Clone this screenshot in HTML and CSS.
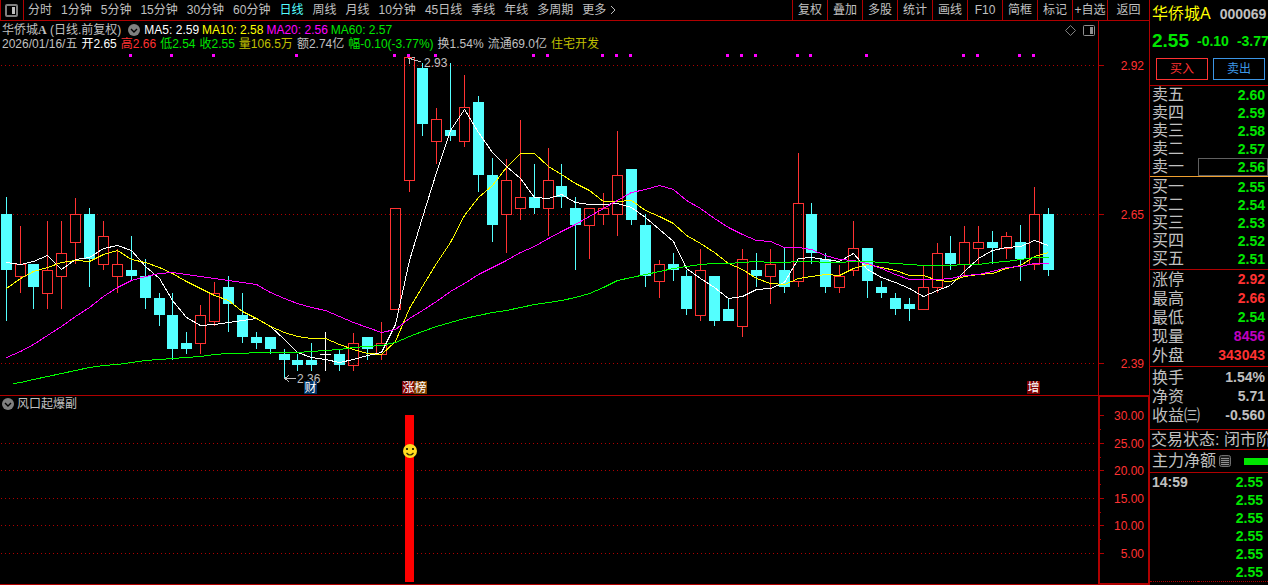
FILE: index.html
```html
<!DOCTYPE html>
<html lang="zh-CN">
<head>
<meta charset="utf-8">
<title>华侨城A 日线</title>
<link rel="stylesheet" href="styles.css">
</head>
<body>
<div class="app">
  <main class="main">
    <nav class="toolbar">
      <button class="layout-btn" type="button" aria-label="布局">
        <svg width="13" height="13" viewBox="0 0 13 13"><rect x="1" y="1" width="11" height="11" rx="1" fill="none" stroke="#808080" stroke-width="2"/><rect x="7" y="3" width="3" height="7" fill="#c0c0c0"/></svg>
      </button>
      <div class="periods">
        <button type="button">分时</button>
        <button type="button">1分钟</button>
        <button type="button">5分钟</button>
        <button type="button">15分钟</button>
        <button type="button">30分钟</button>
        <button type="button">60分钟</button>
        <button type="button" class="active">日线</button>
        <button type="button">周线</button>
        <button type="button">月线</button>
        <button type="button">10分钟</button>
        <button type="button">45日线</button>
        <button type="button">季线</button>
        <button type="button">年线</button>
        <button type="button">多周期</button>
        <button type="button" class="more">更多<svg width="6" height="10" viewBox="0 0 6 10"><path d="M1 1l4 4-4 4" fill="none" stroke="#c0c0c0"/></svg></button>
      </div>
      <div class="tools">
        <button type="button">复权</button>
        <button type="button">叠加</button>
        <button type="button">多股</button>
        <button type="button">统计</button>
        <button type="button">画线</button>
        <button type="button">F10</button>
        <button type="button">简框</button>
        <button type="button">标记</button>
        <button type="button">+自选</button>
        <button type="button" class="back">返回</button>
      </div>
    </nav>

    <section class="panel">
      <svg class="plot" id="kline" viewBox="0 21 1149 374" preserveAspectRatio="none"></svg>
      <div class="info">
        <div class="info-row">
          <span class="title">华侨城<b class="serif">A</b> (日线.前复权)</span>
          <svg class="drop" width="12" height="12" viewBox="0 0 12 12"><circle cx="6" cy="6" r="6" fill="#808080"/><path d="M3 5l3 3 3-3" fill="none" stroke="#000" stroke-width="1.4"/></svg>
          <span class="ma white">MA5: 2.59</span>
          <span class="ma yellow">MA10: 2.58</span>
          <span class="ma magenta">MA20: 2.56</span>
          <span class="ma lime">MA60: 2.57</span>
          <span class="corner">
            <svg width="11" height="11" viewBox="0 0 11 11"><path d="M5.500.5l5 5-5 5-5-5z" fill="none" stroke="#808080"/></svg>
            <svg width="12" height="11" viewBox="0 0 12 11"><rect x=".5" y=".5" width="11" height="10" rx="1" fill="none" stroke="#909090"/><rect x="7" y="2" width="3" height="7" fill="#909090"/></svg>
          </span>
        </div>
        <div class="info-row quote">
          <span>2026/01/16/五</span>
          <span class="white">开2.65</span>
          <span class="red">高2.66</span>
          <span class="green">低2.54</span>
          <span class="green">收2.55</span>
          <span class="olive">量106.5万</span>
          <span>额2.74亿</span>
          <span class="green">幅-0.10(-3.77%)</span>
          <span>换1.54%</span>
          <span>流通69.0亿</span>
          <span class="olive">住宅开发</span>
        </div>
      </div>
    </section>

    <section class="panel">
      <svg class="plot" id="indicator" viewBox="0 396 1149 188" preserveAspectRatio="none"></svg>
      <div class="info sub">
        <div class="info-row">
          <svg width="12" height="12" viewBox="0 0 12 12"><circle cx="6" cy="6" r="6" fill="#808080"/><path d="M3 5l3 3 3-3" fill="none" stroke="#000" stroke-width="1.4"/></svg>
          <span class="sub-title">风口起爆副</span>
        </div>
      </div>
    </section>
  </main>

  <aside class="side">
    <header class="stock">
      <div class="stock-name"><span class="yellow">华侨城A</span><b>000069</b></div>
      <div class="stock-price green"><b class="last">2.55</b><b>-0.10</b><b>-3.77%</b></div>
      <div class="trade">
        <button type="button" class="buy">买入</button>
        <button type="button" class="sell">卖出</button>
      </div>
    </header>
    <table class="book asks">
      <tr><th>卖五</th><td>2.60</td></tr>
      <tr><th>卖四</th><td>2.59</td></tr>
      <tr><th>卖三</th><td>2.58</td></tr>
      <tr><th>卖二</th><td>2.57</td></tr>
      <tr><th>卖一</th><td class="picked">2.56</td></tr>
    </table>
    <div class="bids">
      <table class="book">
        <tr><th>买一</th><td>2.55</td></tr>
        <tr><th>买二</th><td>2.54</td></tr>
        <tr><th>买三</th><td>2.53</td></tr>
        <tr><th>买四</th><td>2.52</td></tr>
        <tr><th>买五</th><td>2.51</td></tr>
      </table>
    </div>
    <div class="stats">
      <table class="book tall">
        <tr><th>涨停</th><td class="red">2.92</td></tr>
        <tr><th>最高</th><td class="red">2.66</td></tr>
        <tr><th>最低</th><td>2.54</td></tr>
        <tr><th>现量</th><td class="purple">8456</td></tr>
        <tr><th>外盘</th><td class="red">343043</td></tr>
      </table>
    </div>
    <div class="ratios">
      <table class="book tall">
        <tr><th>换手</th><td class="grey">1.54%</td></tr>
        <tr><th>净资</th><td class="grey">5.71</td></tr>
        <tr><th>收益㈢</th><td class="grey">-0.560</td></tr>
      </table>
    </div>
    <div class="status">交易状态: 闭市阶段</div>
    <div class="flow">
      <span>主力净额</span>
      <svg width="12" height="12" viewBox="0 0 12 12"><rect x=".5" y=".5" width="11" height="11" rx="2" fill="#202020" stroke="#707070"/><path d="M2 3.500h8M2 5.500h8M2 7.500h8M2 9.500h8" stroke="#909090"/></svg>
      <i class="flow-bar"></i>
    </div>
    <table class="book ticks">
      <tr><th>14:59</th><td>2.55</td></tr>
      <tr><th></th><td>2.55</td></tr>
      <tr><th></th><td>2.55</td></tr>
      <tr><th></th><td>2.55</td></tr>
      <tr><th></th><td>2.55</td></tr>
      <tr><th></th><td>2.55</td></tr>
    </table>
  </aside>
</div>
<script src="chart.js"></script>
</body>
</html>
```

FILE: styles.css
```css
* { box-sizing: border-box; }

body {
  margin: 0;
  background: #000;
  color: #c0c0c0;
  font: 12px/14px "Liberation Sans", "Noto Sans CJK SC", sans-serif;
}

button {
  margin: 0;
  padding: 0;
  border: 0;
  background: none;
  color: inherit;
  font: inherit;
  white-space: nowrap;
}

svg { display: block; flex: none; }

.app {
  display: grid;
  grid-template-columns: minmax(0, 1fr) 119px;
  height: 100vh;
  overflow: hidden;
}

.main {
  display: grid;
  grid-template-rows: 21px minmax(0, 375fr) minmax(0, 189fr);
  min-width: 0;
}

/* toolbar */
.toolbar {
  display: flex;
  border-bottom: 1px solid #b00000;
}
.layout-btn {
  width: 24px;
  padding-left: 4px;
  border-left: 1px solid #b00000;
  border-right: 1px solid #b00000;
}
.periods {
  display: flex;
  flex: 1;
  gap: 9px;
  padding-left: 4px;
  overflow: hidden;
}
.periods .active { color: #54ffff; }
.more { display: flex; align-items: center; gap: 4px; }
.tools { display: flex; }
.tools button { width: 35px; border-left: 1px solid #b00000; }
.tools .back { width: 42px; }

/* chart panels */
.panel {
  display: grid;
  min-height: 0;
  border-bottom: 1px solid #b00000;
}
.plot {
  grid-area: 1 / 1;
  width: 100%;
  height: 100%;
  min-height: 0;
}
.info {
  grid-area: 1 / 1;
  align-self: start;
  padding: 2px 54px 0 2px;
  white-space: nowrap;
}
.info.sub { padding-top: 1px; }
.info-row { display: flex; align-items: center; height: 14px; }
.info-row .drop { margin: 0 4px 0 7px; }
.ma { margin-right: 3px; }
.quote { gap: 4px; }
.sub-title { padding-left: 3px; }
.serif { font-family: "Liberation Serif", serif; }
.corner { display: flex; gap: 7px; margin-left: auto; }

.axis { fill: #ff3232; text-anchor: end; }
.note { fill: #c0c0c0; }
.badge { fill: #fff; text-anchor: middle; }

/* colours */
.white { color: #fff; }
.yellow { color: #ff0; }
.magenta { color: #f0f; }
.lime { color: #00e600; }
.green { color: #00e600; }
.olive { color: #c0c000; }

/* quote column */
.side {
  border-left: 1px solid #b00000;
  overflow: hidden;
  font-size: 16px;
  white-space: nowrap;
}
.side b { font-size: 14px; }
.stock { padding: 4px 0 5px 2px; border-bottom: 1px solid #b00000; }
.stock-name { display: flex; gap: 9px; line-height: 20px; }
.stock-price { display: flex; gap: 8px; line-height: 34px; }
.stock-price .last { font-size: 19px; }
.trade { display: flex; gap: 5px; padding-left: 4px; }
.trade button { width: 52px; height: 22px; border: 1px solid; font-size: 12px; }
.buy { color: #ff3232; }
.sell { color: #3c96e6; }

.book { width: 100%; border-collapse: collapse; table-layout: fixed; line-height: 18px; }
.book th {
  width: 48px;
  height: 18px;
  padding: 0 0 0 2px;
  font-weight: normal;
  text-align: left;
}
.book td {
  height: 18px;
  padding: 0 3px 0 0;
  color: #00e600;
  font-size: 14px;
  font-weight: bold;
  text-align: right;
}
.book.tall { line-height: 19px; }
.book.tall th, .book.tall td { height: 19px; }
.book .picked { box-shadow: inset 0 0 0 1px #606060; }
.book .red, .red { color: #ff3232; }
.book .purple { color: #c000c0; }
.book .grey { color: #c0c0c0; }

.asks { border-bottom: 1px solid #f0a030; }
.bids { padding: 1px 0; border-bottom: 1px solid #b00000; }
.stats { padding-bottom: 1px; border-bottom: 1px solid #b00000; }
.ratios { padding: 1px 0 4px; border-bottom: 1px solid #b00000; }
.status { padding-left: 1px; line-height: 19px; border-bottom: 1px solid #b00000; }
.flow {
  display: flex;
  align-items: center;
  gap: 3px;
  height: 23px;
  padding-left: 2px;
  border-bottom: 1px solid #b00000;
}
.flow-bar { flex: 1; height: 7px; margin-left: 10px; background: #00e600; }
.ticks { border-bottom: 1px dotted #b00000; }
.ticks th { font-size: 14px; font-weight: bold; }
.ticks td { padding-right: 5px; }
```

FILE: chart.js
```js
// Candle rows: [kind, high, bodyTop, bodyBottom, low]; u = up, d = down, f = flat
const candles = [
  ['d',197,214,270,321],['u',226,264,277,293],['d',264,264,287,309],['u',221,270,294,309],
  ['u',221,253,277,309],['u',198,214,243,264],['d',208,214,259,287],['u',221,236,265,270],
  ['u',249,264,277,293],['d',236,270,276,280],['d',259,276,298,309],['d',293,298,315,326],
  ['d',293,315,349,360],['d',332,343,349,354],['u',305,315,344,354],['u',282,293,322,326],
  ['d',276,287,304,332],['d',293,315,337,343],['d',332,337,343,349],['d',337,337,349,354],
  ['d',349,354,360,378],['d',354,360,365,371],['d',343,360,365,371],['f',332,354,355,371],
  ['d',350,354,365,371],['u',333,343,366,371],['d',337,337,349,360],['u',322,343,355,360],
  ['u',208,208,310,310],['u',57,57,181,192],['d',63,68,124,136],['u',108,119,142,164],
  ['d',63,130,136,141],['u',75,107,142,147],['d',96,102,175,192],['d',158,175,225,242],
  ['u',159,180,215,253],['u',120,197,209,220],['d',164,197,208,214],['u',148,180,209,236],
  ['d',164,186,197,208],['d',197,208,225,270],['u',208,208,226,259],['u',193,208,215,225],
  ['u',131,175,215,236],['d',169,169,220,225],['d',214,225,276,287],['u',260,264,282,298],
  ['d',253,264,270,281],['d',270,276,309,315],['u',249,270,316,321],['d',276,276,321,326],
  ['d',298,309,321,321],['u',249,259,327,337],['d',253,270,276,287],['u',249,264,277,304],
  ['d',248,270,287,293],['u',153,203,282,287],['d',203,214,253,264],['d',253,259,287,293],
  ['u',265,276,288,293],['u',221,248,271,276],['d',248,248,281,298],['d',281,287,293,298],
  ['d',293,298,309,315],['d',298,304,309,321],['u',266,287,310,310],['u',243,253,288,293],
  ['d',236,253,264,270],['u',226,242,265,276],['u',226,242,249,264],['d',231,242,248,264],
  ['u',232,236,249,259],['d',225,242,259,281],['u',187,214,265,270],['d',208,214,270,276]
];

const averages = [
  ['#fff', [262,264,261,255,269,259,257,248,245,250,266,278,300,317,325,324,322,320,318,326,339,352,357,359,362,359,355,352,324,260,217,172,130,109,132,152,166,178,197,198,194,202,204,204,203,207,217,229,241,268,278,287,298,296,289,288,282,258,257,259,261,253,269,277,282,288,296,290,285,271,258,250,247,246,240,245]],
  ['#ff0', [288,278,271,267,262,260,261,254,250,259,262,267,273,281,288,295,300,311,318,326,332,336,338,338,344,349,353,354,341,308,286,263,242,215,197,185,167,153,153,166,174,183,190,201,201,200,210,216,223,235,243,252,263,269,278,283,284,278,276,274,275,268,264,267,270,275,275,280,281,276,274,273,268,265,256,252]],
  ['#f0f', [357,351,344,335,326,316,307,296,287,280,276,273,272,274,276,278,280,282,284,292,298,303,307,310,316,322,327,332,329,318,310,301,291,283,274,267,260,252,246,238,231,224,216,208,200,192,189,185,189,200,208,218,227,234,240,241,247,247,249,255,259,260,263,268,274,279,279,279,278,275,274,271,267,266,263,263]],
  ['#0f0', [383,382,379,376,373,370,367,365,364,362,360,359,358,357,356,354,353,353,352,352,352,352,351,350,349,347,346,345,342,336,331,326,322,318,315,312,310,307,304,302,300,297,293,287,280,277,274,271,268,266,264,263,263,262,261,262,262,261,261,262,262,261,261,262,263,264,265,265,265,264,264,262,261,259,257,257]]
];

const signals = [9,12,15,21,28,29,31,38,39,43,44,45,52,53,54,57,58,62,69,70,73,74];
const RED = '#b00000';
const cx = i => Math.floor(6.2 + 13.893 * i);
const rect = (x, y, w, h, fill) => `<rect x="${x}" y="${y}" width="${w}" height="${h}" fill="${fill}"/>`;
const gridLine = y => `<path d="M1 ${y}.5H1097" stroke="${RED}" stroke-dasharray="1 3"/>`;
const tick = (y, len) => rect(1099, y, len, 1, RED);
const label = (y, text) => `<text class="axis" x="1144" y="${y + 5}">${text}</text>`;

function candle([kind, high, top, bottom, low], i) {
  const x = cx(i);
  if (kind === 'd') {
    return rect(x, high, 1, low - high, '#54ffff') + rect(x - 5, top, 11, bottom - top, '#54ffff');
  }
  if (kind === 'f') {
    return rect(x, high, 1, low - high, '#fff') + rect(x - 5, top, 11, 1, '#fff');
  }
  return rect(x, high, 1, top - high, '#ff3232') + rect(x, bottom, 1, low - bottom, '#ff3232') +
    `<rect x="${x - 4.5}" y="${top + 0.5}" width="10" height="${bottom - top - 1}" fill="none" stroke="#ff3232"/>`;
}

function average([color, ys]) {
  const first = color === '#0f0' ? 7 : 0;
  const points = ys.map((y, i) => `${cx(i) + (i ? 0 : first) + 0.5},${y + 0.5}`).join(' ');
  return `<polyline points="${points}" fill="none" stroke="${color}"/>`;
}

function badge(x, text, fill) {
  return rect(x, 381, 13, 13, fill) + `<text class="badge" x="${x + 6.5}" y="392">${text}</text>`;
}

function drawKline() {
  const shapes = [65, 214, 363].map(gridLine).join('') +
    candles.map(candle).join('') +
    averages.map(average).join('') +
    signals.map(i => rect(cx(i) - 2, 54, 3, 3, '#f0f')).join('') +
    rect(1098, 21, 1, 374, RED) +
    [65, 214, 363].map(y => tick(y, 5)).join('') +
    '<path d="M285 378.500H296M289 375l-4 3.500 4 3.500M409 58.500L421 62M410 64l-1-5.500 6-1" fill="none" stroke="#c0c0c0"/>';
  const texts = '<text class="note" x="297" y="383">2.36</text><text class="note" x="424" y="67">2.93</text>' +
    badge(304, '财', '#003366') + badge(402, '涨', '#800000') + badge(414, '榜', '#804000') + badge(1027, '增', '#800000') +
    label(65, '2.92') + label(214, '2.65') + label(363, '2.39');
  document.getElementById('kline').innerHTML = `<g shape-rendering="crispEdges">${shapes}</g>${texts}`;
}

function drawIndicator() {
  const levels = [[415, '30.00'], [443, '25.00'], [470, '20.00'], [498, '15.00'], [525, '10.00'], [553, '5.00']];
  const shapes = levels.slice(1).map(([y]) => gridLine(y)).join('') +
    rect(401, 443, 17, 1, '#000') +
    rect(405, 415, 9, 167, '#f00') +
    `<rect x="1099" y="396" width="50" height="188" fill="none" stroke="${RED}" stroke-width="2"/>` +
    levels.map(([y]) => tick(y, 5)).join('') +
    [429, 457, 484, 512, 539].map(y => tick(y, 2)).join('');
  const face = '<circle cx="410" cy="451" r="7" fill="#ffdc20"/>' +
    '<rect x="406" y="448" width="2" height="2" fill="#303000"/><rect x="412" y="448" width="2" height="2" fill="#303000"/>' +
    '<path d="M406.500 453q3.500 4 7 0" fill="none" stroke="#303000" stroke-width="1.200"/>';
  document.getElementById('indicator').innerHTML =
    `<g shape-rendering="crispEdges">${shapes}</g>${face}` + levels.map(([y, t]) => label(y, t)).join('');
}

drawKline();
drawIndicator();
```
